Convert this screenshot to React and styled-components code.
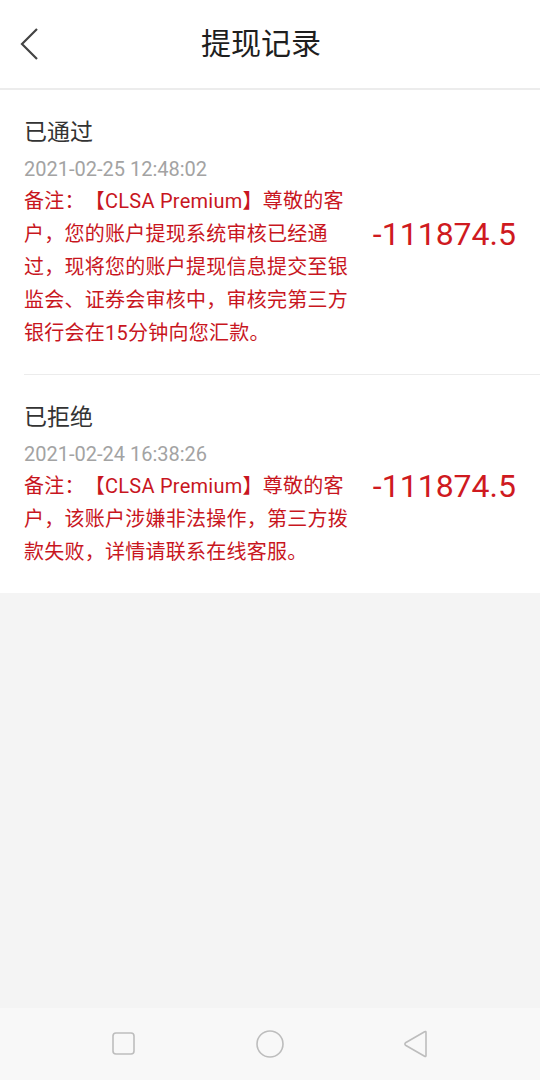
import React from 'react';
import styled, { createGlobalStyle } from 'styled-components';

const GlobalStyle = createGlobalStyle`
  html, body {
    margin: 0;
    padding: 0;
    background: #f4f4f4;
  }
  body {
    font-family: Roboto, "Noto Sans CJK SC", sans-serif;
    text-spacing-trim: space-all;
  }
`;

const Page = styled.div`
  width: 540px;
  height: 1080px;
  display: flex;
  flex-direction: column;
  background: #f4f4f4;
  overflow: hidden;
`;

const Header = styled.div`
  height: 88px;
  flex-shrink: 0;
  display: flex;
  align-items: center;
  background: #fff;
  border-bottom: 2px solid #ececec;
`;

const BackButton = styled.div`
  width: 58px;
  height: 88px;
  display: flex;
  align-items: center;
  padding-left: 18px;
  box-sizing: border-box;
`;

const Title = styled.div`
  flex: 1;
  text-align: center;
  padding-right: 76px;
  font-size: 30px;
  color: #1e1e1e;
  line-height: 88px;
`;

const List = styled.div`
  background: #fff;
  padding-left: 24px;
`;

const Item = styled.div`
  display: flex;
  align-items: center;
  justify-content: space-between;
  padding: 28px 24px 24px 0;
  border-top: ${p => (p.$first ? 'none' : '1px solid #ececec')};
`;

const Info = styled.div`
  width: 332px;
  display: flex;
  flex-direction: column;
`;

const Status = styled.div`
  font-size: 23px;
  line-height: 30px;
  color: #333;
`;

const Time = styled.div`
  margin-top: 6px;
  font-size: 20px;
  line-height: 30px;
  color: #a3a3a3;
`;

const Remark = styled.div`
  margin-top: 1px;
  font-size: 20px;
  letter-spacing: 0.25px;
  line-height: 33px;
  color: #c8161e;
  text-spacing-trim: space-all;
`;

const Amount = styled.div`
  font-size: 32px;
  color: #cf1a1f;
  white-space: nowrap;
`;

const Filler = styled.div`
  flex: 1;
`;

const NavBar = styled.div`
  height: 72px;
  flex-shrink: 0;
  background: #f8f8f8;
  display: flex;
  align-items: center;
  justify-content: center;
`;

const NavSlot = styled.div`
  width: 146px;
  display: flex;
  justify-content: center;
  align-items: center;
`;

const records = [
  {
    status: '已通过',
    time: '2021-02-25 12:48:02',
    remark:
      '备注：【CLSA Premium】尊敬的客户，您的账户提现系统审核已经通过，现将您的账户提现信息提交至银监会、证券会审核中，审核完第三方银行会在15分钟向您汇款。',
    amount: '-111874.5',
  },
  {
    status: '已拒绝',
    time: '2021-02-24 16:38:26',
    remark: '备注：【CLSA Premium】尊敬的客户，该账户涉嫌非法操作，第三方拨款失败，详情请联系在线客服。',
    amount: '-111874.5',
  },
];

export default function App() {
  return (
    <Page>
      <GlobalStyle />
      <Header>
        <BackButton>
          <svg width="22" height="34" viewBox="0 0 22 34">
            <polyline points="19,2 4,17 19,32" fill="none" stroke="#444" strokeWidth="2.2" />
          </svg>
        </BackButton>
        <Title>提现记录</Title>
      </Header>
      <List>
        {records.map((r, i) => (
          <Item key={i} $first={i === 0}>
            <Info>
              <Status>{r.status}</Status>
              <Time>{r.time}</Time>
              <Remark>{r.remark}</Remark>
            </Info>
            <Amount>{r.amount}</Amount>
          </Item>
        ))}
      </List>
      <Filler />
      <NavBar>
        <NavSlot>
          <svg width="26" height="26" viewBox="0 0 26 26">
            <rect x="2" y="2" width="21" height="21" rx="3" fill="none" stroke="#bdbdbd" strokeWidth="1.6" />
          </svg>
        </NavSlot>
        <NavSlot>
          <svg width="30" height="30" viewBox="0 0 30 30">
            <circle cx="15" cy="15" r="13" fill="none" stroke="#bdbdbd" strokeWidth="1.6" />
          </svg>
        </NavSlot>
        <NavSlot>
          <svg width="28" height="28" viewBox="0 0 28 28">
            <path d="M24 2.5 L24 25.5 Q24 27 22.6 26.2 L3.5 15.2 Q2.3 14 3.5 12.8 L22.6 1.8 Q24 1 24 2.5 Z" fill="none" stroke="#bdbdbd" strokeWidth="1.6" strokeLinejoin="round" />
          </svg>
        </NavSlot>
      </NavBar>
    </Page>
  );
}
